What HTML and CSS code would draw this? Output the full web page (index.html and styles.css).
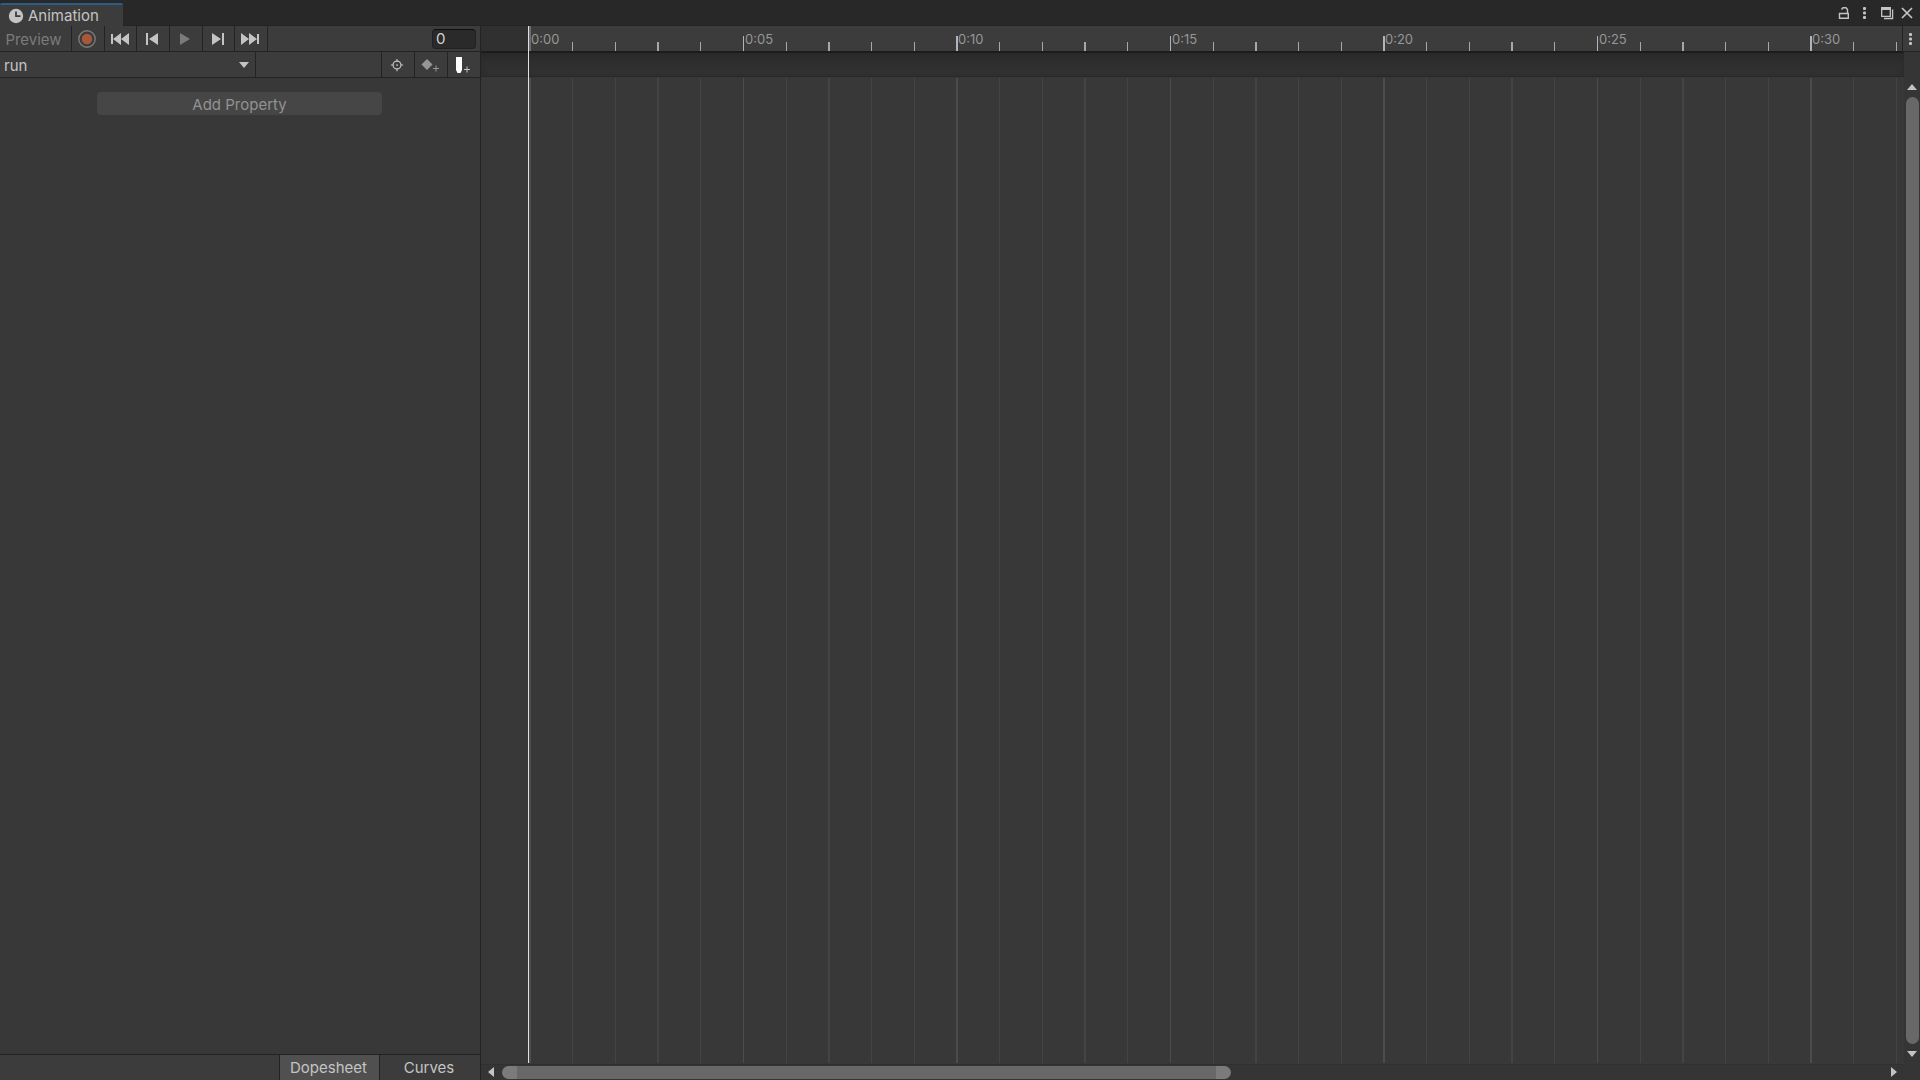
FILE: index.html
```html
<!DOCTYPE html>
<html lang="en">
<head>
<meta charset="utf-8">
<title>Animation</title>
<link rel="stylesheet" href="styles.css">
</head>
<body>
<header class="titlebar">
  <div class="tab">
    <svg width="16" height="16" viewBox="0 0 16 16"><circle cx="8" cy="8" r="7.2" fill="#c4c4c4"/><path d="M8 3.5V8.2H12.5" fill="none" stroke="#3c3c3c" stroke-width="1.8"/></svg>
    <span>Animation</span>
  </div>
  <div class="window-controls">
    <button aria-label="Lock"><svg width="12" height="14" viewBox="0 0 12 14" fill="none" stroke="#c4c4c4" stroke-width="1.4"><path d="M1.500 7.500H10.300V12.300H1.500Z M9.500 7.500V3.500L8 1.700H5L3.500 3.500"/></svg></button>
    <button aria-label="Menu"><svg width="4" height="14" viewBox="0 0 4 14" fill="#c4c4c4"><rect y="1" width="3" height="3" rx="1"/><rect y="5.500" width="3" height="3" rx="1"/><rect y="10" width="3" height="3" rx="1"/></svg></button>
    <div class="size-controls">
      <button aria-label="Maximize"><svg width="14" height="14" viewBox="0 0 14 14" fill="none" stroke="#c4c4c4" stroke-width="1.300"><path d="M1.700 1.700H10.300V10.300H1.700Z"/><path d="M1.500 2.500H10.500" stroke-width="3"/><path d="M12.600 3.500V12.500H4"/></svg></button>
      <button aria-label="Close"><svg width="12" height="14" viewBox="0 0 12 14" stroke="#c4c4c4" stroke-width="1.700"><path d="M1 2L11 12M11 2L1 12"/></svg></button>
    </div>
  </div>
</header>
<main class="editor">
  <section class="side">
    <div class="toolbar">
      <button class="preview" disabled>Preview</button>
      <div class="transport">
        <button class="tool" aria-label="Record"><svg width="18" height="18" viewBox="0 0 18 18"><circle cx="9" cy="9" r="8.200" fill="none" stroke="#7b7b7b" stroke-width="1.400"/><circle cx="9" cy="9" r="5.200" fill="#a9573b"/></svg></button>
        <button class="tool" aria-label="First frame"><svg width="18" height="12" viewBox="0 0 18 12" fill="#c4c4c4"><path d="M0 1H2V11H0Z M2 6L10 0V12Z M10 6L18 0V12Z"/></svg></button>
        <button class="tool" aria-label="Previous keyframe"><svg width="12" height="12" viewBox="0 0 12 12" fill="#c4c4c4"><path d="M0 0H2V12H0Z M3 6L12 0V12Z"/></svg></button>
        <button class="tool" aria-label="Play" disabled><svg width="12" height="12" viewBox="0 0 12 12" fill="#7b7b7b"><path d="M1 0L11 6L1 12Z"/></svg></button>
        <button class="tool" aria-label="Next keyframe"><svg width="12" height="12" viewBox="0 0 12 12" fill="#c4c4c4"><path d="M10 0H12V12H10Z M9 6L0 0V12Z"/></svg></button>
        <button class="tool" aria-label="Last frame"><svg width="18" height="12" viewBox="0 0 18 12" fill="#c4c4c4"><path d="M16 1H18V11H16Z M16 6L8 0V12Z M8 6L0 0V12Z"/></svg></button>
      </div>
      <input class="frame" type="text" value="0" aria-label="Current frame">
    </div>
    <div class="toolbar">
      <label class="clip">
        <select aria-label="Animation clip"><option>run</option></select>
        <svg width="10" height="6" viewBox="0 0 10 6"><path d="M0 0H10L5 6Z" fill="#c4c4c4"/></svg>
      </label>
      <div class="key-tools">
        <button class="tool" aria-label="Filter by selection"><svg width="14" height="14" viewBox="0 0 16 16" fill="none" stroke="#c4c4c4" stroke-width="1.300"><circle cx="8" cy="8" r="4.500"/><path d="M8 1V4M8 12V15M1 8H4M12 8H15"/><circle cx="8" cy="8" r="1" fill="#c4c4c4" stroke="none"/></svg></button>
        <button class="tool" aria-label="Add keyframe" disabled><svg width="18" height="16" viewBox="0 0 18 16"><path d="M6 2L11.500 7.500L6 13L.5 7.500Z" fill="#969696"/><path d="M12 11.500H18M15 8.500V14.500" stroke="#969696"/></svg></button>
        <button class="tool" aria-label="Add event"><svg width="14" height="16" viewBox="0 0 14 16"><path d="M0 0H6V13L4.500 16H1.500L0 13Z" fill="#fff"/><path d="M8 12.500H14M11 9.500V15.500" stroke="#c4c4c4"/></svg></button>
      </div>
    </div>
    <div class="properties"><button class="add" disabled>Add Property</button></div>
    <div class="modes"><button class="mode active">Dopesheet</button><button class="mode">Curves</button></div>
  </section>
  <section class="timeline">
    <div class="track-area">
      <div class="ruler"></div>
      <div class="events"></div>
      <div class="sheet"></div>
      <div class="marks" id="marks"></div>
      <div class="playhead"></div>
    </div>
    <aside class="vertical">
      <button class="options" aria-label="Timeline options"><svg width="4" height="14" viewBox="0 0 4 14" fill="#c4c4c4"><rect y="1" width="3" height="3" rx="1"/><rect y="5.500" width="3" height="3" rx="1"/><rect y="10" width="3" height="3" rx="1"/></svg></button>
      <button class="arrow" aria-label="Scroll up"><svg width="10" height="6" viewBox="0 0 10 6"><path d="M0 6H10L5 0Z" fill="#c4c4c4"/></svg></button>
      <div class="vthumb"></div>
      <button class="arrow" aria-label="Scroll down"><svg width="10" height="6" viewBox="0 0 10 6"><path d="M0 0H10L5 6Z" fill="#c4c4c4"/></svg></button>
    </aside>
    <footer class="horizontal">
      <button class="arrow" aria-label="Scroll left"><svg width="6" height="10" viewBox="0 0 6 10"><path d="M6 0V10L0 5Z" fill="#c4c4c4"/></svg></button>
      <div class="htrack"><div class="hthumb"></div><div class="hrest"></div></div>
      <button class="arrow" aria-label="Scroll right"><svg width="6" height="10" viewBox="0 0 6 10"><path d="M0 0V10L6 5Z" fill="#c4c4c4"/></svg></button>
    </footer>
  </section>
</main>
<script src="timeline.js"></script>
</body>
</html>
```
FILE: styles.css
```css
* { box-sizing: border-box; }
body {
  margin: 0;
  height: 100vh;
  display: flex;
  flex-direction: column;
  overflow: hidden;
  background: #383838;
  color: #c4c4c4;
  font: 15px/20px Inter, sans-serif;
}
button, input, select {
  margin: 0;
  padding: 0;
  border: 0;
  background: none;
  color: inherit;
  font: inherit;
}
svg { display: block; flex: none; }

.titlebar {
  display: flex;
  justify-content: space-between;
  align-items: flex-end;
  height: 26px;
  flex: none;
  background: #282828;
  box-shadow: inset 0 -1px #232323;
}
.tab {
  display: flex;
  align-items: center;
  gap: 4px;
  width: 123px;
  height: 23px;
  padding-left: 8px;
  border-top: 2px solid #2c5d87;
  border-radius: 2px 2px 0 0;
  background: #3c3c3c;
}
.window-controls {
  display: flex;
  align-self: flex-start;
  align-items: center;
  height: 26px;
  gap: 13px;
  padding-right: 7px;
}
.size-controls { display: flex; gap: 7px; }
.editor { display: flex; flex: 1; min-height: 0; }
.side {
  display: flex;
  flex-direction: column;
  width: 481px;
  flex: none;
  border-right: 1px solid #232323;
}
.toolbar {
  display: flex;
  align-items: center;
  height: 26px;
  flex: none;
  background: #3c3c3c;
  border-bottom: 1px solid #232323;
}
.preview, .tool {
  display: flex;
  align-items: center;
  justify-content: center;
  height: 25px;
  border-right: 1px solid #232323;
}
.preview { width: 72px; padding: 2px 4px 0 0; color: #7b7b7b; }
.transport { display: flex; width: 196px; }
.tool { flex: 1; padding-right: 2px; }
.frame {
  width: 44px;
  height: 20px;
  margin: 0 4px 0 auto;
  padding-left: 3px;
  border: 1px solid #212121;
  border-top-color: #0d0d0d;
  border-radius: 4px;
  background: #2a2a2a;
  color: #d2d2d2;
}
.clip {
  display: flex;
  align-items: center;
  width: 256px;
  height: 25px;
  padding: 0 6px 0 4px;
  border-right: 1px solid #232323;
}
.clip select { flex: 1; padding-top: 2px; appearance: none; }
.key-tools {
  display: flex;
  width: 99px;
  margin-left: auto;
  border-left: 1px solid #232323;
}
.key-tools .tool:last-child { border-right: 0; }
.properties { flex: 1; padding: 14px 98px 14px 97px; }
.add {
  display: block;
  width: 100%;
  height: 23px;
  padding-top: 2px;
  border-radius: 4px;
  background: #464646;
  color: #929292;
}
.modes {
  display: flex;
  justify-content: flex-end;
  height: 26px;
  background: #3c3c3c;
  border-top: 1px solid #232323;
}
.mode { width: 100px; padding-right: 2px; }
.mode.active {
  width: 101px;
  border: solid #232323;
  border-width: 0 1px;
  background: #505050;
}

.timeline {
  display: grid;
  grid-template: 1fr 16px / 1fr 16px;
  flex: 1;
  min-width: 0;
}
.track-area {
  display: flex;
  flex-direction: column;
  position: relative;
  overflow: hidden;
}
.ruler {
  height: 25px;
  background: linear-gradient(90deg, #303030 47px, #3c3c3c 47px);
}
.events {
  height: 26px;
  border-top: 2px solid #1c1c1c;
  border-bottom: 1px solid #282828;
  background: #303030;
  box-shadow: inset 0 6px 6px #2a2a2a;
}
.sheet { flex: 1; }
.marks { position: absolute; inset: 0 0 0 48px; }
.mark { position: absolute; top: 0; bottom: 1px; width: 1px; }
.mark.wide { width: 2px; }
.tick {
  position: absolute;
  top: 16px;
  width: 100%;
  height: 9px;
  background: #a8a8a8;
}
.major .tick { top: 10px; height: 15px; background: #b4b4b4; }
.mark:first-child .tick { top: 0; height: 25px; background: #6c6c6c; }
.grid-line {
  position: absolute;
  top: 52px;
  bottom: 0;
  width: 100%;
  background: #444444;
}
.major .grid-line { background: #4c4c4c; }
.time {
  position: absolute;
  left: 2px;
  top: 5px;
  color: #969696;
  font-size: 13px;
  line-height: 16px;
}
.playhead {
  position: absolute;
  left: 47px;
  top: 0;
  bottom: 1px;
  width: 1px;
  background: #e0e0e0;
}
.vertical {
  display: flex;
  flex-direction: column;
  align-items: center;
  position: relative;
  grid-row: 1 / 3;
  grid-column: 2;
  background: #353535;
}
.options {
  display: flex;
  align-items: center;
  align-self: flex-end;
  justify-content: center;
  width: 18px;
  height: 26px;
  margin-bottom: 27px;
  padding-right: 2px;
  flex: none;
  border-left: 1px solid #232323;
  border-bottom: 1px solid #232323;
  background: #3c3c3c;
}
.arrow {
  display: flex;
  align-items: center;
  justify-content: center;
  width: 16px;
  height: 16px;
  flex: none;
}
.vthumb { width: 13px; flex: 1; margin: 2px 0; border-radius: 7px; background: #686868; }
.vertical .arrow:last-child { margin-bottom: 18px; }
.horizontal {
  display: flex;
  align-items: center;
  padding: 0 2px;
  background: #353535;
  box-shadow: inset 0 1px #303030;
}
.htrack { display: flex; flex: 1; padding: 0 3px; }
.hthumb {
  flex: 730 0 0;
  height: 13px;
  border: solid #7b7b7b;
  border-width: 0 15px;
  border-radius: 7px;
  background: #686868;
}
.hrest { flex: 650 0 0; border: solid transparent; border-width: 0 15px; }
```
FILE: timeline.js
```js
// Horizontal zoom: pixels between two frames.
const FRAME_WIDTH = 42.7;
const WIDE_FRAMES = [0, 3, 7];

const marks = document.getElementById("marks");

function drawMarks() {
  marks.replaceChildren();
  const frameCount = Math.ceil(marks.clientWidth / FRAME_WIDTH);
  for (let frame = 0; frame < frameCount; frame++) {
    const mark = document.createElement("div");
    const major = frame % 5 === 0;
    mark.className = "mark";
    mark.classList.toggle("major", major);
    mark.classList.toggle("wide", WIDE_FRAMES.includes(frame % 10));
    mark.style.left = Math.round(frame * FRAME_WIDTH + 0.3) + "px";
    mark.innerHTML = '<div class="tick"></div><div class="grid-line"></div>';
    if (major) {
      const time = document.createElement("span");
      time.className = "time";
      time.textContent = "0:" + String(frame).padStart(2, "0");
      mark.append(time);
    }
    marks.append(mark);
  }
}

drawMarks();
window.addEventListener("resize", drawMarks);
```
